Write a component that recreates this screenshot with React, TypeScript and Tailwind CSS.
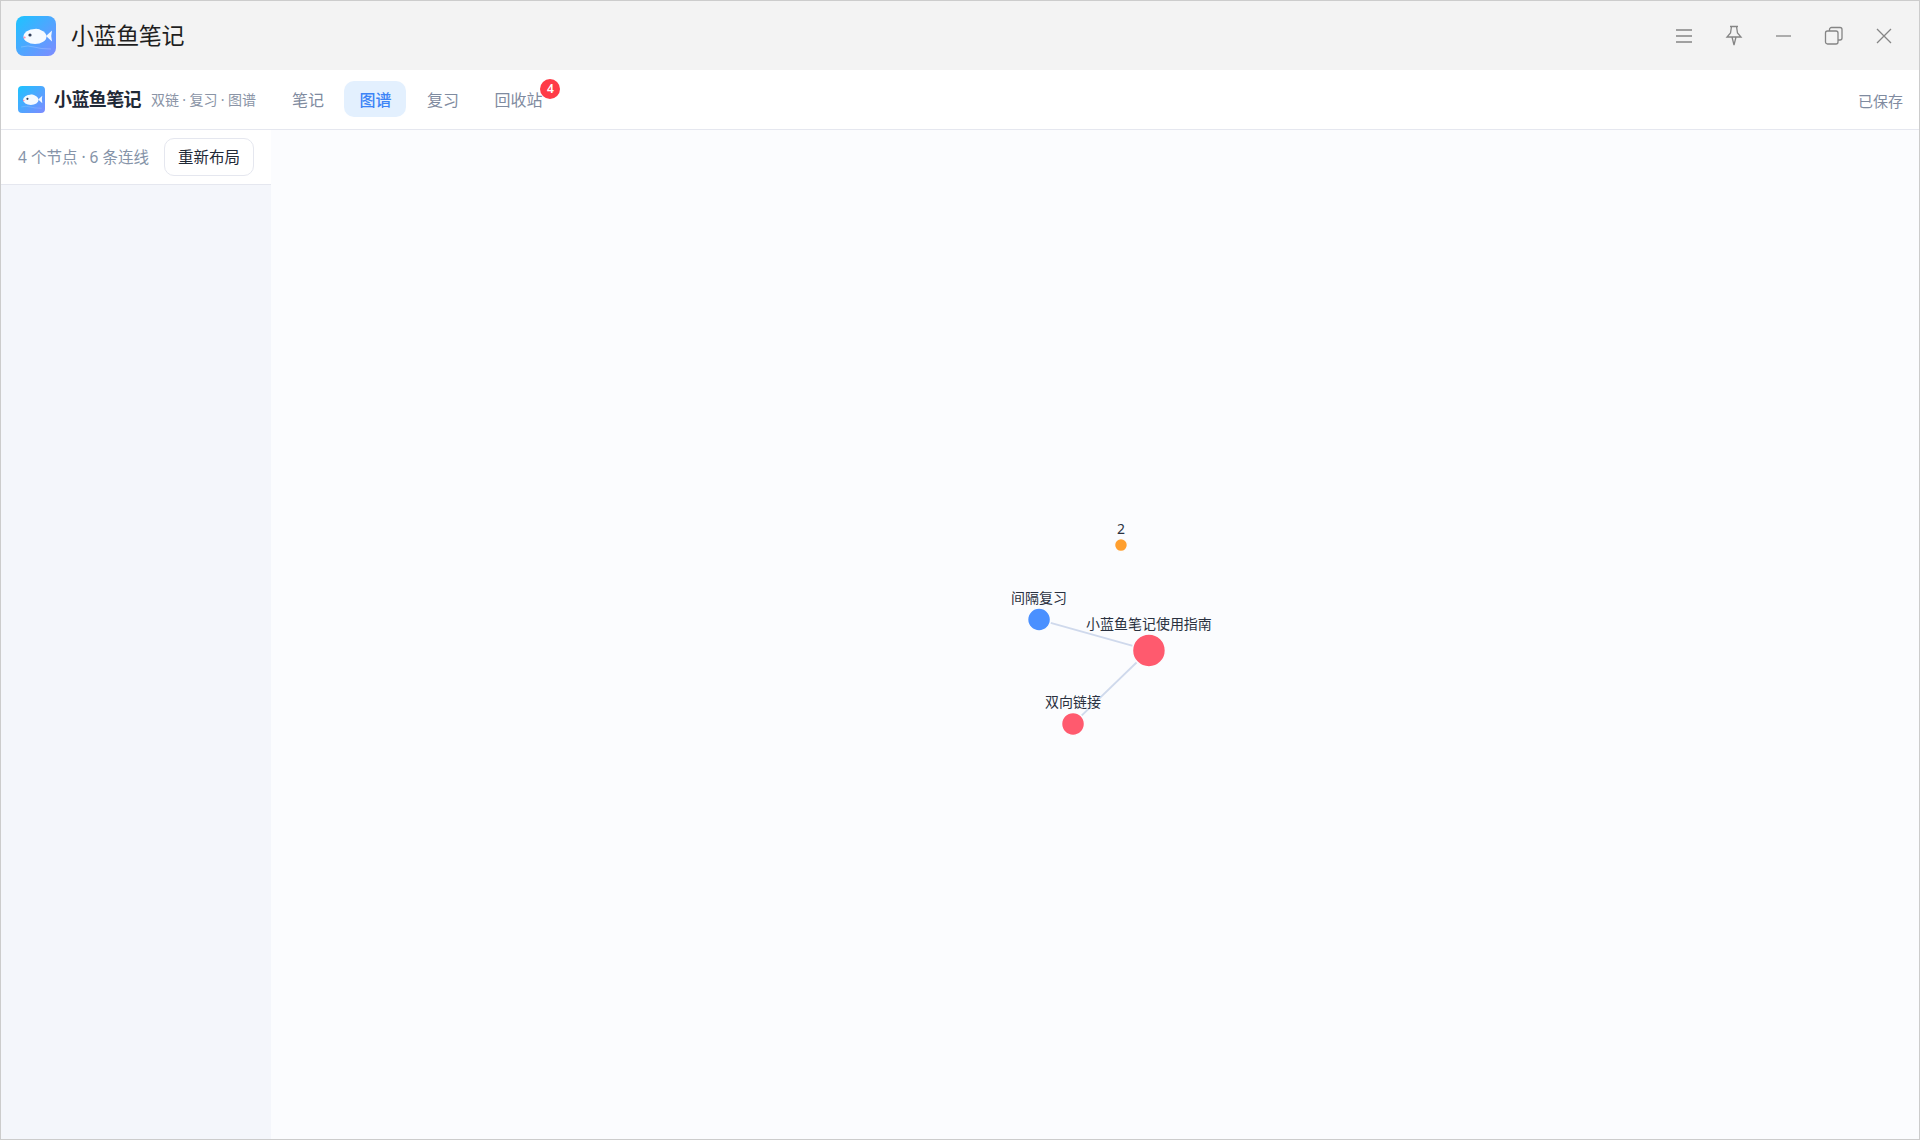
import { useId } from "react";

const cjk = "font-['Noto_Sans','Noto_Sans_CJK_SC',sans-serif]";

function FishLogo({ size, radius }: { size: number; radius: number }) {
  const id = useId();
  return (
    <svg width={size} height={size} viewBox="0 0 40 40" className="shrink-0">
      <defs>
        <linearGradient id={id} x1="0" y1="0" x2="1" y2="1">
          <stop offset="0" stopColor="#1cc4ff" />
          <stop offset="1" stopColor="#7e8aff" />
        </linearGradient>
      </defs>
      <rect width="40" height="40" rx={radius} fill={`url(#${id})`} />
      <path d="M30 20 L36 14.5 Q34.5 20 36 25.5 Z" fill="#f2f8ff" />
      <ellipse cx="19" cy="20.5" rx="11.5" ry="7.5" fill="#f5faff" />
      <path d="M17 13.5 Q21 11.5 25 14.5 Z" fill="#f5faff" />
      <circle cx="14" cy="19" r="1.6" fill="#33415c" />
      <ellipse cx="8.5" cy="21.5" rx="1.2" ry="1" fill="#ff8fb0" />
      <path d="M5 31 Q12 29 18 31 T35 33" fill="none" stroke="#ffffff" strokeOpacity="0.3" strokeWidth="0.7" />
    </svg>
  );
}

function WindowIcon({ children }: { children: React.ReactNode }) {
  return (
    <svg width="22" height="22" viewBox="0 0 22 22" fill="none" stroke="#858585" strokeWidth="1.3">
      {children}
    </svg>
  );
}

function Tab({ label, active }: { label: string; active?: boolean }) {
  return (
    <div
      className={`h-9 px-[15px] pt-[2px] flex items-center rounded-[10px] text-[16px] ${
        active ? "bg-[#e3f0fe] text-[#3d84f6] font-medium" : "text-[#7f8ba0]"
      }`}
    >
      {label}
    </div>
  );
}

function GraphCanvas() {
  const label = "fill-[#2a3140] text-[14px]";
  return (
    <svg className="w-full h-full" viewBox="0 0 1648 1010">
      <g transform="translate(-271 -130)">
        <line x1="1039" y1="620" x2="1149" y2="651" stroke="#cfd9ec" strokeWidth="1.8" />
        <line x1="1149" y1="651" x2="1073" y2="724.500" stroke="#cfd9ec" strokeWidth="1.8" />
        <circle cx="1121" cy="545.500" r="6.500" fill="#ff9f2e" stroke="#fbfcfe" strokeWidth="1.5" />
        <circle cx="1039" cy="620" r="11.500" fill="#4a90ff" stroke="#fbfcfe" strokeWidth="1.5" />
        <circle cx="1149" cy="651" r="16.500" fill="#ff5a6e" stroke="#fbfcfe" strokeWidth="1.5" />
        <circle cx="1073" cy="724.500" r="11.500" fill="#ff5a6e" stroke="#fbfcfe" strokeWidth="1.5" />
        <text x="1121" y="534" textAnchor="middle" className={label}>2</text>
        <text x="1039" y="603" textAnchor="middle" className={label}>间隔复习</text>
        <text x="1149" y="629" textAnchor="middle" className={label}>小蓝鱼笔记使用指南</text>
        <text x="1073" y="708" textAnchor="middle" className={label}>双向链接</text>
      </g>
    </svg>
  );
}

export default function App() {
  return (
    <div className={`w-[1920px] h-[1140px] flex flex-col overflow-hidden border border-[#cccccc] bg-white ${cjk}`}>
      {/* title bar */}
      <div className="h-[69px] shrink-0 bg-[#f3f3f3] flex items-center pl-[15px] pr-[24px]">
        <FishLogo size={40} radius={8} />
        <span className="ml-[15px] text-[23px] leading-none tracking-[-0.4px] text-[#1f1f1f]">小蓝鱼笔记</span>
        <div className="ml-auto flex items-center gap-[28px]">
          <WindowIcon>
            <path d="M3 5h16M3 11h16M3 17h16" />
          </WindowIcon>
          <WindowIcon>
            <path d="M7 1.500h8M8.500 1.500 7.500 8 4 12h14l-3.500-4-1-6.500M9 12l2 8 2-8" />
          </WindowIcon>
          <WindowIcon>
            <path d="M3 11h15" />
          </WindowIcon>
          <WindowIcon>
            <rect x="2.500" y="6" width="12.500" height="13" rx="2" />
            <path d="M6.500 6V4.500a2 2 0 0 1 2-2H17a2 2 0 0 1 2 2V13a2 2 0 0 1-2 2h-2" />
          </WindowIcon>
          <WindowIcon>
            <path d="M4 4l14 14M18 4 4 18" />
          </WindowIcon>
        </div>
      </div>

      {/* nav */}
      <div className="h-[60px] shrink-0 border-b border-[#e5e7ef] flex items-center pl-[17px] pr-[16px]">
        <FishLogo size={27} radius={6} />
        <span className="ml-[9px] text-[18px] tracking-[-0.6px] font-bold text-[#1f2937]">小蓝鱼笔记</span>
        <span className="ml-[10px] text-[14px] tracking-[-0.1px] text-[#8a94a6]">双链 · 复习 · 图谱</span>
        <div className="ml-[21px] mb-[1px] flex items-center gap-[5.5px]">
          <Tab label="笔记" />
          <Tab label="图谱" active />
          <Tab label="复习" />
          <div className="relative">
            <Tab label="回收站" />
            <span className="absolute right-[-3px] top-[-2px] w-5 h-5 rounded-full bg-[#ff3b47] text-white text-[12px] font-semibold flex items-center justify-center">
              4
            </span>
          </div>
        </div>
        <span className="ml-auto text-[15px] text-[#7f8ba0] translate-y-[2px]">已保存</span>
      </div>

      {/* body */}
      <div className="flex-1 min-h-0 flex">
        <aside className="w-[270px] shrink-0 bg-[#f4f6fb]">
          <div className="h-[55px] bg-white border-b border-[#e5e7ef] flex items-center pl-[17px]">
            <span className="text-[15.500px] text-[#8593a8] pt-[2px]">4 个节点 · 6 条连线</span>
            <button className="ml-[15px] w-[90px] h-[38px] pt-[2px] border border-[#e5e7ef] rounded-[10px] bg-white text-[15.500px] text-[#1f2937]">
              重新布局
            </button>
          </div>
        </aside>
        <main className="flex-1 min-w-0 bg-[#fbfcfe]">
          <GraphCanvas />
        </main>
      </div>
    </div>
  );
}
